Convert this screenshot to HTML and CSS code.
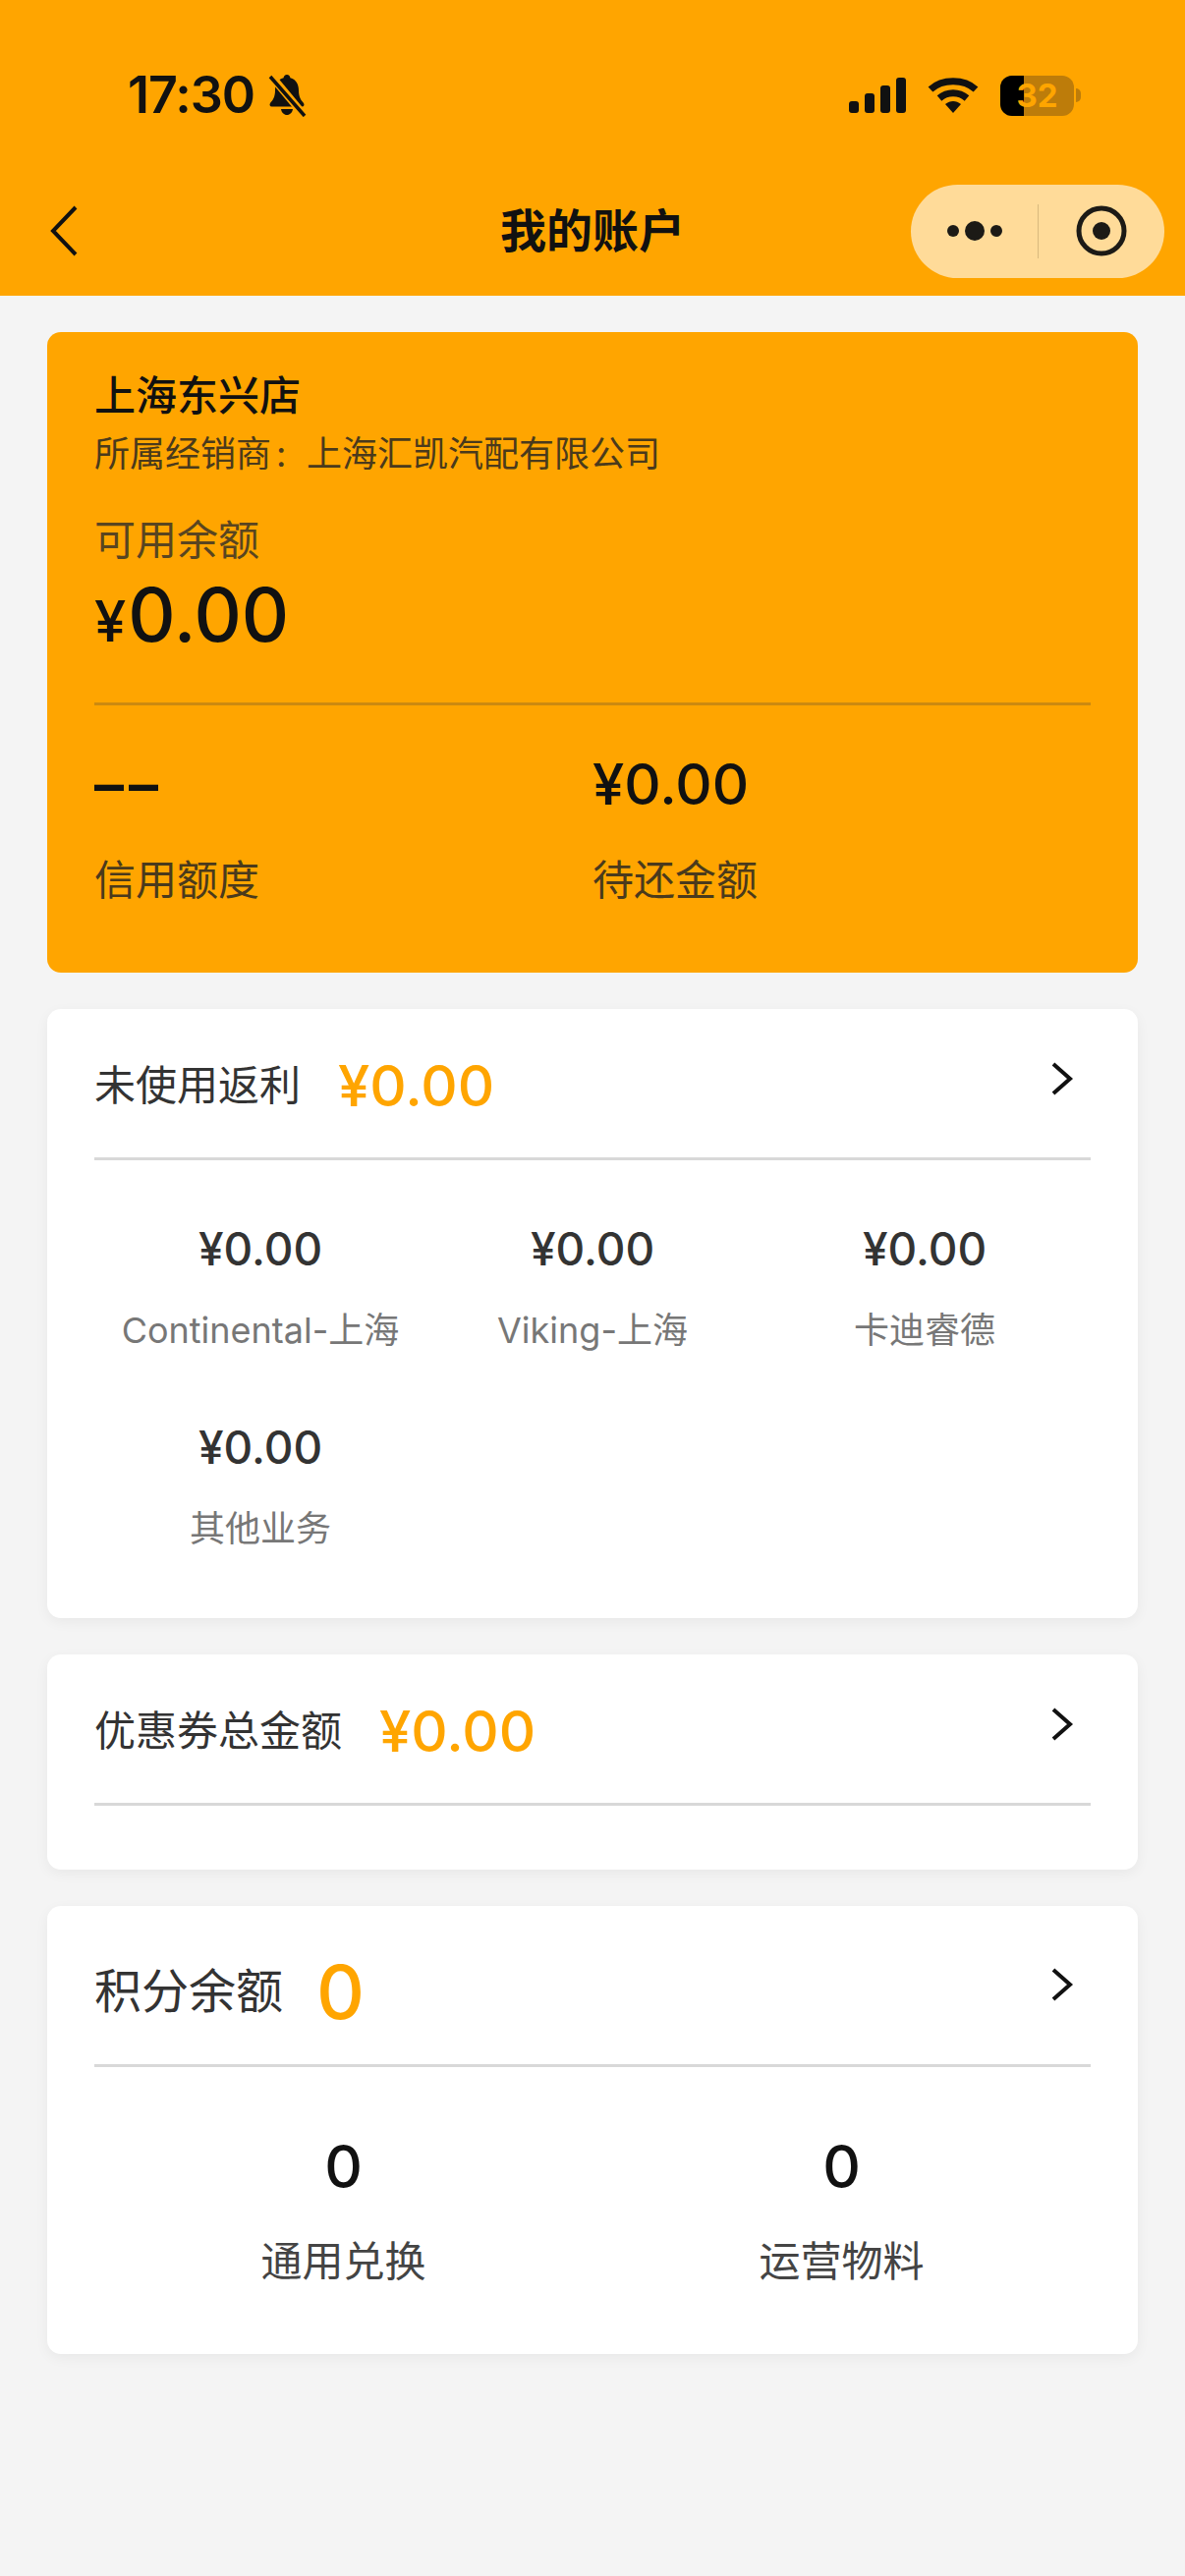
FILE: index.html
```html
<!DOCTYPE html>
<html lang="zh-CN">
<head>
  <meta charset="UTF-8" />
  <title>我的账户</title>
  <meta name="viewport" content="width=device-width, initial-scale=1.0" />
  <link rel="stylesheet" href="styles.css">
</head>
<body>
  <header class="top">
    <div class="status">
      <div class="status-left">
        <span class="time">17:30</span>
        <svg class="bell" width="40" height="44" viewBox="0 0 40 44">
          <path d="M20 1c2 0 3.200 1.300 3.400 3.200C29.500 5.800 32 11 32 17c0 7 2.500 10 5 13 1 1.500.5 3.500-1.500 3.500H4.500C2.500 33.500 2 31.500 3 30c2.500-3 5-6 5-13C8 11 10.500 5.800 16.600 4.200 16.800 2.300 18 1 20 1z" fill="#111"/>
          <path d="M14 36h12c-.5 3.500-3 6-6 6s-5.500-2.500-6-6z" fill="#111"/>
          <path d="M3 1l35 42" stroke="#ffa500" stroke-width="8"/>
          <path d="M3 3l35 40" stroke="#111" stroke-width="3.500"/>
        </svg>
      </div>
      <div class="status-right">
        <svg width="58" height="36" viewBox="0 0 58 36">
          <rect x="0" y="24" width="10" height="12" rx="3" fill="#111"/>
          <rect x="16" y="16" width="10" height="20" rx="3" fill="#111"/>
          <rect x="32" y="8" width="10" height="28" rx="3" fill="#111"/>
          <rect x="48" y="0" width="10" height="36" rx="3" fill="#111"/>
        </svg>
        <svg width="52" height="38" viewBox="0 0 52 38">
          <path d="M3 13C15 2 37 2 49 13" fill="none" stroke="#111" stroke-width="7"/>
          <path d="M12 22c8-7 20-7 28 0" fill="none" stroke="#111" stroke-width="7"/>
          <path d="M18 28c5-4 11-4 16 0l-8 9z" fill="#111"/>
        </svg>
        <div class="battery">
          <div class="battery-body">
            <span class="battery-fill"></span>
            <span class="battery-num">32</span>
          </div>
          <span class="battery-tip"></span>
        </div>
      </div>
    </div>
    <nav class="nav">
      <svg class="back" width="30" height="52" viewBox="0 0 30 52">
        <path d="M27 2L4 26l23 24" fill="none" stroke="#111" stroke-width="4"/>
      </svg>
      <h1 class="nav-title">我的账户</h1>
      <div class="capsule">
        <svg class="capsule-dots" width="58" height="20" viewBox="0 0 58 20">
          <circle cx="7" cy="10" r="6" fill="#1c1a16"/>
          <circle cx="29" cy="10" r="10" fill="#1c1a16"/>
          <circle cx="51" cy="10" r="6" fill="#1c1a16"/>
        </svg>
        <span class="capsule-line"></span>
        <svg class="capsule-target" width="52" height="52" viewBox="0 0 52 52">
          <circle cx="26" cy="26" r="23" fill="none" stroke="#1c1a16" stroke-width="5"/>
          <circle cx="26" cy="26" r="9" fill="#1c1a16"/>
        </svg>
      </div>
    </nav>
  </header>

  <main class="container">
    <section class="account">
      <div class="shop-name">上海东兴店</div>
      <div class="shop-dealer">所属经销商<span class="colon">:</span>上海汇凯汽配有限公司</div>
      <div class="balance-label">可用余额</div>
      <div class="balance"><span class="balance-yen">¥</span>0.00</div>
      <div class="account-line"></div>
      <div class="account-stats">
        <div class="stat">
          <div class="stat-num stat-empty">––</div>
          <div class="stat-label">信用额度</div>
        </div>
        <div class="stat">
          <div class="stat-num">¥0.00</div>
          <div class="stat-label">待还金额</div>
        </div>
      </div>
    </section>

    <section class="card">
      <div class="card-head">
        <span class="head-label">未使用返利</span>
        <span class="head-num">¥0.00</span>
        <svg class="chevron" width="24" height="34" viewBox="0 0 24 34"><path d="M3 2l17 15L3 32" fill="none" stroke="#111" stroke-width="4"/></svg>
      </div>
      <div class="rebate-grid">
        <div class="rebate"><div class="rebate-num">¥0.00</div><div class="rebate-label">Continental-上海</div></div>
        <div class="rebate"><div class="rebate-num">¥0.00</div><div class="rebate-label">Viking-上海</div></div>
        <div class="rebate"><div class="rebate-num">¥0.00</div><div class="rebate-label">卡迪睿德</div></div>
        <div class="rebate"><div class="rebate-num">¥0.00</div><div class="rebate-label">其他业务</div></div>
      </div>
    </section>

    <section class="card card-short">
      <div class="card-head">
        <span class="head-label">优惠券总金额</span>
        <span class="head-num">¥0.00</span>
        <svg class="chevron" width="24" height="34" viewBox="0 0 24 34"><path d="M3 2l17 15L3 32" fill="none" stroke="#111" stroke-width="4"/></svg>
      </div>
    </section>

    <section class="card">
      <div class="card-head card-head-lg">
        <span class="head-label head-label-lg">积分余额</span>
        <span class="head-num head-num-lg">0</span>
        <svg class="chevron" width="24" height="34" viewBox="0 0 24 34"><path d="M3 2l17 15L3 32" fill="none" stroke="#111" stroke-width="4"/></svg>
      </div>
      <div class="points">
        <div class="point"><div class="point-num">0</div><div class="point-label">通用兑换</div></div>
        <div class="point"><div class="point-num">0</div><div class="point-label">运营物料</div></div>
      </div>
    </section>
  </main>
</body>
</html>
```

FILE: styles.css
```css
:root {
  --orange: #ffa500;
  --page: #f4f4f4;
  --line: #d8d8d8;
}

* {
  box-sizing: border-box;
}

body {
  margin: 0;
  min-height: 2622px;
  background-color: var(--page);
  color: #111;
  font-family: Inter, "Noto Sans CJK SC", sans-serif;
}

.top {
  height: 301px;
  padding-top: 20px;
  background-color: var(--orange);
}

.status {
  display: flex;
  justify-content: space-between;
  align-items: center;
  height: 154px;
  padding: 0 106px 0 130px;
}

.status-left {
  display: flex;
  align-items: center;
  gap: 13px;
}

.time {
  font-size: 52px;
  font-weight: 600;
  line-height: 60px;
  letter-spacing: -1px;
}

.status-right {
  display: flex;
  align-items: center;
  gap: 22px;
}

.battery {
  display: flex;
  align-items: center;
  gap: 2px;
}

.battery-body {
  position: relative;
  width: 75px;
  height: 41px;
  border-radius: 12px;
  overflow: hidden;
  background-color: #bd7c0a;
}

.battery-fill {
  display: block;
  width: 24px;
  height: 100%;
  background-color: #000;
}

.battery-num {
  position: absolute;
  top: 0;
  left: 0;
  width: 100%;
  color: var(--orange);
  font-size: 33px;
  font-weight: 700;
  line-height: 41px;
  text-align: center;
}

.battery-tip {
  width: 5px;
  height: 14px;
  border-radius: 0 5px 5px 0;
  background-color: #bd7c0a;
}

.nav {
  display: grid;
  grid-template-columns: 1fr auto 1fr;
  align-items: center;
  height: 122px;
  padding: 0 21px;
}

.back {
  margin-left: 29px;
}

.nav-title {
  margin: 0;
  font-size: 47px;
  font-weight: 700;
  line-height: 60px;
}

.capsule {
  display: flex;
  align-items: center;
  justify-self: end;
  width: 258px;
  height: 95px;
  padding-left: 36px;
  border-radius: 48px;
  background-color: #ffdb99;
}

.capsule-line {
  width: 1px;
  height: 55px;
  margin-left: 35px;
  background-color: #d9b97e;
}

.capsule-target {
  margin-left: 38px;
}

.container {
  padding: 37px 48px 0;
}

.account {
  height: 652px;
  padding: 40px 48px 0;
  border-radius: 14px;
  background-color: var(--orange);
}

.shop-name {
  font-size: 42px;
  font-weight: 500;
  line-height: 50px;
}

.shop-dealer {
  margin-top: 12px;
  color: #4a3a1c;
  font-size: 36px;
  line-height: 44px;
}

.colon {
  display: inline-block;
  width: 36px;
  padding-left: 5px;
}

.balance-label {
  margin-top: 41px;
  color: #594520;
  font-size: 42px;
  line-height: 50px;
}

.balance {
  margin-top: 6px;
  font-size: 75px;
  font-weight: 500;
  line-height: 90px;
}

.balance-yen {
  font-size: 58px;
  line-height: 1;
  margin-right: 2px;
}

.account-line {
  height: 3px;
  margin-top: 44px;
  background-color: #cc8a10;
}

.account-stats {
  display: grid;
  grid-template-columns: 507px 1fr;
  margin-top: 45px;
}

.stat-num {
  font-size: 58px;
  font-weight: 500;
  line-height: 70px;
}

.stat-empty {
  font-weight: 600;
  font-size: 60px;
  letter-spacing: 5px;
  color: #111;
}

.stat-label {
  margin-top: 38px;
  color: #4a3a1c;
  font-size: 42px;
  line-height: 50px;
}

.card {
  margin-top: 37px;
  padding: 0 48px 69px;
  border-radius: 14px;
  background-color: #fff;
  box-shadow: 0 4px 14px rgba(0, 0, 0, 0.05);
}

.card-short {
  padding-bottom: 65px;
}

.card-head {
  display: flex;
  align-items: center;
  height: 154px;
  padding-top: 4px;
  border-bottom: 3px solid var(--line);
}

.card-head-lg {
  height: 164px;
  padding-top: 13px;
}

.head-label {
  color: #333;
  font-size: 42px;
  line-height: 50px;
}

.head-label-lg {
  font-size: 48px;
}

.head-num {
  margin-left: 38px;
  color: var(--orange);
  font-size: 58px;
  font-weight: 500;
  line-height: 70px;
}

.head-num-lg {
  margin-left: 34px;
  font-size: 76px;
  line-height: 90px;
}

.chevron {
  margin: 0 17px 14px auto;
}

.rebate-grid {
  display: grid;
  grid-template-columns: repeat(3, 1fr);
  row-gap: 67px;
  padding-top: 60px;
  text-align: center;
}

.rebate-num {
  color: #333;
  font-size: 46px;
  font-weight: 500;
  line-height: 60px;
}

.rebate-label {
  margin-top: 31px;
  color: #777;
  font-size: 36px;
  line-height: 44px;
}

.points {
  display: grid;
  grid-template-columns: repeat(2, 1fr);
  padding-top: 66px;
  text-align: center;
}

.point-num {
  font-size: 60px;
  font-weight: 500;
  line-height: 70px;
}

.point-label {
  margin-top: 37px;
  color: #444;
  font-size: 42px;
  line-height: 50px;
}
```
